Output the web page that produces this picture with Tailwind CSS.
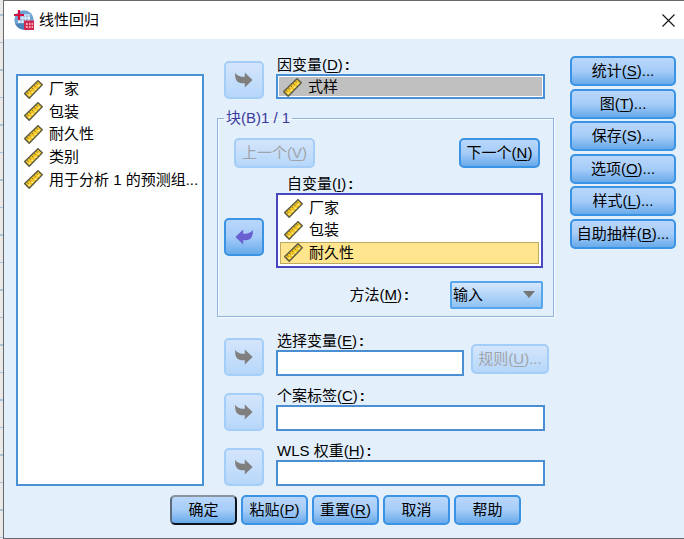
<!DOCTYPE html>
<html lang="zh-CN">
<head>
  <meta charset="UTF-8" />
  <meta name="viewport" content="width=device-width, initial-scale=1.0" />
  <title>线性回归</title>
  <script src="https://cdn.jsdelivr.net/npm/@tailwindcss/browser@4"></script>
</head>
<body class="flex min-h-screen bg-[#ebe9e8] text-[15px] leading-[18px] text-black font-['Liberation_Sans','Noto_Sans_CJK_SC',sans-serif]">

  <!-- Shared icons -->
  <svg class="hidden">
    <symbol id="ruler" viewBox="0 0 19 19">
      <path d="M0.7 13.6L14 0.700L18.300 4.800L5.200 18.300Z" fill="#f6c51f" stroke="#5c5c44" stroke-width="1.4" />
      <path d="M2.600 12l1.800 1.800M5 9.700l1.800 1.800M7.400 7.400l1.800 1.800M9.800 5.100l1.800 1.800M12.200 2.800l1.800 1.800" stroke="#77713f" stroke-width="1" />
      <path d="M4.500 15.200h1.800M7.500 12.200h1.800M10.600 9.200h1.800M13.700 5.600h1.800" stroke="#fff09a" stroke-width="1.600" />
    </symbol>
    <symbol id="move" viewBox="0 0 18 16">
      <path d="M0.3 0.8C2.5 4.4 5.5 4.8 9.8 4.8V0.4L17.6 8L9.8 15.6V11.2H6.5C2.5 11.2 -0.6 7.5 0.3 0.8Z" fill="currentColor" />
    </symbol>
  </svg>

  <!-- Sheet behind the dialog -->
  <div class="w-[3px] bg-[repeating-linear-gradient(to_bottom,transparent_0_14px,#a9c3da_14px_16px,transparent_16px_42px,#a9c3da_42px_43px,transparent_43px_55px)]"></div>

  <main class="flex flex-1 flex-col border-y border-l border-[#69696c] bg-[#e3effb]">
    <header class="flex h-[38px] items-center bg-white pl-[10px] pr-[9px]">
      <svg class="h-5 w-5" viewBox="0 0 20 20">
        <circle cx="10" cy="10" r="9.7" fill="#6fa3d2" />
        <path d="M1.500 14A9.700 9.700 0 0 0 11 19.600V13Z" fill="#4a83b9" />
        <path d="M6 4h10v8H6z" fill="#b8d3ec" />
        <path d="M4 7h12v6H4z" fill="#e8f2fb" />
        <path d="M4 10h12M7 6v8M10 6v8M13 6v8" stroke="#7eaad3" stroke-width="0.8" />
        <path d="M5 0v10M0 5h10" stroke="#d3123f" stroke-width="2.200" />
        <path d="M10 10.500h10V20H10z" fill="#d0284e" />
        <path d="M12 14h1.800M15 14h1.600M17.600 14h1.400M12 17h1.800M15 17h1.600M17.600 17h1.400" stroke="#f9dbe2" stroke-width="1.700" />
      </svg>
      <h1 class="ml-[5px] flex-1">线性回归</h1>
      <button aria-label="关闭">
        <svg class="h-[13px] w-[13px]" viewBox="0 0 13 13" fill="none" stroke="#111" stroke-width="1.1"><path d="M0.5 0.5l12 12M12.500 0.500l-12 12" /></svg>
      </button>
    </header>

    <div class="flex pl-3 pr-2 pt-[17px]">

      <!-- Available variables -->
      <div class="mt-[18px] w-[188px] border-2 border-[#4a90d6] bg-white pl-[6px] pt-[2px]">
        <ul class="grid h-[113px] auto-rows-fr" role="listbox" aria-label="变量">
          <li class="flex items-center gap-[6px] whitespace-nowrap" role="option"><svg class="h-[19px] w-[19px] shrink-0"><use href="#ruler" /></svg>厂家</li>
          <li class="flex items-center gap-[6px] whitespace-nowrap" role="option"><svg class="h-[19px] w-[19px] shrink-0"><use href="#ruler" /></svg>包装</li>
          <li class="flex items-center gap-[6px] whitespace-nowrap" role="option"><svg class="h-[19px] w-[19px] shrink-0"><use href="#ruler" /></svg>耐久性</li>
          <li class="flex items-center gap-[6px] whitespace-nowrap" role="option"><svg class="h-[19px] w-[19px] shrink-0"><use href="#ruler" /></svg>类别</li>
          <li class="flex items-center gap-[6px] whitespace-nowrap" role="option"><svg class="h-[19px] w-[19px] shrink-0"><use href="#ruler" /></svg>用于分析 1 的预测组...</li>
        </ul>
      </div>

      <div class="ml-[13px] mr-4 flex-1">
        <!-- Dependent -->
        <div class="flex items-end gap-3 pl-[7px] pr-[9px]">
          <button disabled aria-label="移入因变量" class="flex h-[38px] w-10 items-center justify-center rounded-[5px] border-2 border-[#a4cef7] bg-linear-to-b from-[#d4e5fc] to-[#b6d7fa] text-[#7f7f7f]"><svg class="h-4 w-[18px]"><use href="#move" /></svg></button>
          <div class="flex-1">
            <p id="dep" class="pl-[1px]">因变量(<u class="underline-offset-2">D</u>)<b class="ml-[2px]">:</b></p>
            <ul class="h-[25px] border-2 border-[#4a90d6] bg-white p-[1px]" role="listbox" aria-labelledby="dep">
              <li class="flex h-full items-center gap-[6px] bg-[#c0c0c0] pl-1 pt-[1px]" role="option"><svg class="h-[19px] w-[19px]"><use href="#ruler" /></svg>式样</li>
            </ul>
          </div>
        </div>

        <!-- Block -->
        <fieldset class="mt-[11px] border border-[#8fb3da] pb-[7px] pl-[6px] pr-[10px] shadow-[inset_1px_1px_0_#f5faff,1px_1px_0_#f5faff]">
          <legend class="px-[2px] leading-[16px] text-[#3a3a9e]">块(B)1 / 1</legend>
          <div class="flex justify-between pl-[10px] pr-[3px] pt-3">
            <button disabled class="h-[30px] w-[81px] rounded-[5px] border-2 border-[#a4cef7] bg-linear-to-b from-[#d4e5fc] to-[#b6d7fa] text-[#a0a4aa]">上一个(<u class="underline-offset-2">V</u>)</button>
            <button class="h-[30px] w-[81px] rounded-[5px] border-2 border-[#3a93e4] bg-linear-to-b from-[#bad7fb] via-[#a5ccf8] to-[#68aaea]">下一个(<u class="underline-offset-2">N</u>)</button>
          </div>
          <div class="mt-[7px] flex items-end gap-3">
            <button aria-label="移出自变量" class="mb-3 flex h-[38px] w-10 items-center justify-center rounded-[5px] border-2 border-[#3a93e4] bg-linear-to-b from-[#bad7fb] via-[#a5ccf8] to-[#68aaea] text-[#6a60d2]"><svg class="h-4 w-[18px] -scale-x-100"><use href="#move" /></svg></button>
            <div class="flex-1">
              <p id="indep" class="pl-[11px]">自变量(<u class="underline-offset-2">I</u>)<b class="ml-[2px]">:</b></p>
              <div class="border-2 border-[#4747c2] bg-white p-[2px]">
                <ul class="grid h-[67px] auto-rows-fr" role="listbox" aria-labelledby="indep">
                  <li class="flex items-center gap-[6px] pl-1" role="option"><svg class="h-[19px] w-[19px]"><use href="#ruler" /></svg>厂家</li>
                  <li class="flex items-center gap-[6px] pl-1" role="option"><svg class="h-[19px] w-[19px]"><use href="#ruler" /></svg>包装</li>
                  <li class="flex items-center gap-[6px] bg-[#fee58e] pl-1 outline -outline-offset-1 outline-[#bda962]" role="option" aria-selected="true"><svg class="h-[19px] w-[19px]"><use href="#ruler" /></svg>耐久性</li>
                </ul>
              </div>
            </div>
          </div>
          <div class="mt-[13px] flex items-center justify-end">
            <label for="method" class="mr-[41px]">方法(<u class="underline-offset-2">M</u>)<b class="ml-[2px]">:</b></label>
            <div class="relative w-[93px]">
              <select id="method" class="h-7 w-full appearance-none rounded-[2px] border-2 border-[#56a6ee] bg-linear-to-b from-[#d6e7fc] to-[#8fc2f3] pl-[1px]">
                <option>输入</option>
              </select>
              <svg class="pointer-events-none absolute right-2 top-[10px] h-[7px] w-3" viewBox="0 0 12 7"><path d="M0 0h12L6 7Z" fill="#757575" /></svg>
            </div>
          </div>
        </fieldset>

        <!-- Selection variable -->
        <div class="mt-[15px] flex items-end pl-[7px] pr-[5px]">
          <button disabled aria-label="移入选择变量" class="mr-3 flex h-[38px] w-10 items-center justify-center rounded-[5px] border-2 border-[#a4cef7] bg-linear-to-b from-[#d4e5fc] to-[#b6d7fa] text-[#7f7f7f]"><svg class="h-4 w-[18px]"><use href="#move" /></svg></button>
          <div class="min-w-0 flex-1">
            <label for="select-var" class="block pl-[1px]">选择变量(<u class="underline-offset-2">E</u>)<b class="ml-[2px]">:</b></label>
            <input id="select-var" type="text" class="block h-[26px] w-full border-2 border-[#4a8fd3] bg-white px-1" />
          </div>
          <button disabled class="mb-[2px] ml-[7px] h-[30px] w-[78px] rounded-[5px] border-2 border-[#a4cef7] bg-linear-to-b from-[#d4e5fc] to-[#b6d7fa] text-[#a0a4aa]">规则(<u class="underline-offset-2">U</u>)...</button>
        </div>

        <!-- Case labels -->
        <div class="mt-[11px] flex items-end gap-3 pl-[7px] pr-[9px]">
          <button disabled aria-label="移入个案标签" class="flex h-[38px] w-10 items-center justify-center rounded-[5px] border-2 border-[#a4cef7] bg-linear-to-b from-[#d4e5fc] to-[#b6d7fa] text-[#7f7f7f]"><svg class="h-4 w-[18px]"><use href="#move" /></svg></button>
          <div class="flex-1">
            <label for="case-label" class="block pl-[1px]">个案标签(<u class="underline-offset-2">C</u>)<b class="ml-[2px]">:</b></label>
            <input id="case-label" type="text" class="block h-[26px] w-full border-2 border-[#4a8fd3] bg-white px-1" />
          </div>
        </div>

        <!-- WLS weight -->
        <div class="mt-[11px] flex items-end gap-3 pl-[7px] pr-[9px]">
          <button disabled aria-label="移入权重" class="flex h-[38px] w-10 items-center justify-center rounded-[5px] border-2 border-[#a4cef7] bg-linear-to-b from-[#d4e5fc] to-[#b6d7fa] text-[#7f7f7f]"><svg class="h-4 w-[18px]"><use href="#move" /></svg></button>
          <div class="flex-1">
            <label for="wls" class="block pl-[1px]">WLS 权重(<u class="underline-offset-2">H</u>)<b class="ml-[2px]">:</b></label>
            <input id="wls" type="text" class="block h-[26px] w-full border-2 border-[#4a8fd3] bg-white px-1" />
          </div>
        </div>
      </div>

      <!-- Option buttons -->
      <div class="flex h-[193px] w-[106px] flex-col justify-between">
        <button class="h-[30px] rounded-[5px] border-2 border-[#3a93e4] bg-linear-to-b from-[#bad7fb] via-[#a5ccf8] to-[#68aaea]">统计(<u class="underline-offset-2">S</u>)...</button>
        <button class="h-[30px] rounded-[5px] border-2 border-[#3a93e4] bg-linear-to-b from-[#bad7fb] via-[#a5ccf8] to-[#68aaea]">图(<u class="underline-offset-2">T</u>)...</button>
        <button class="h-[30px] rounded-[5px] border-2 border-[#3a93e4] bg-linear-to-b from-[#bad7fb] via-[#a5ccf8] to-[#68aaea]">保存(S)...</button>
        <button class="h-[30px] rounded-[5px] border-2 border-[#3a93e4] bg-linear-to-b from-[#bad7fb] via-[#a5ccf8] to-[#68aaea]">选项(<u class="underline-offset-2">O</u>)...</button>
        <button class="h-[30px] rounded-[5px] border-2 border-[#3a93e4] bg-linear-to-b from-[#bad7fb] via-[#a5ccf8] to-[#68aaea]">样式(<u class="underline-offset-2">L</u>)...</button>
        <button class="h-[30px] rounded-[5px] border-2 border-[#3a93e4] bg-linear-to-b from-[#bad7fb] via-[#a5ccf8] to-[#68aaea]">自助抽样(<u class="underline-offset-2">B</u>)...</button>
      </div>
    </div>

    <footer class="flex justify-center gap-1 pb-3 pl-[3px] pt-[9px]">
      <button class="h-[30px] w-[67px] rounded-[5px] border-2 border-b-[#0c1420] border-l-[#5d6b7b] border-r-[#0c1420] border-t-[#8b949e] bg-linear-to-b from-[#bad7fb] via-[#a5ccf8] to-[#68aaea]">确定</button>
      <button class="h-[30px] w-[67px] rounded-[5px] border-2 border-[#3a93e4] bg-linear-to-b from-[#bad7fb] via-[#a5ccf8] to-[#68aaea]">粘贴(<u class="underline-offset-2">P</u>)</button>
      <button class="h-[30px] w-[67px] rounded-[5px] border-2 border-[#3a93e4] bg-linear-to-b from-[#bad7fb] via-[#a5ccf8] to-[#68aaea]">重置(<u class="underline-offset-2">R</u>)</button>
      <button class="h-[30px] w-[67px] rounded-[5px] border-2 border-[#3a93e4] bg-linear-to-b from-[#bad7fb] via-[#a5ccf8] to-[#68aaea]">取消</button>
      <button class="h-[30px] w-[67px] rounded-[5px] border-2 border-[#3a93e4] bg-linear-to-b from-[#bad7fb] via-[#a5ccf8] to-[#68aaea]">帮助</button>
    </footer>
  </main>

</body>
</html>
